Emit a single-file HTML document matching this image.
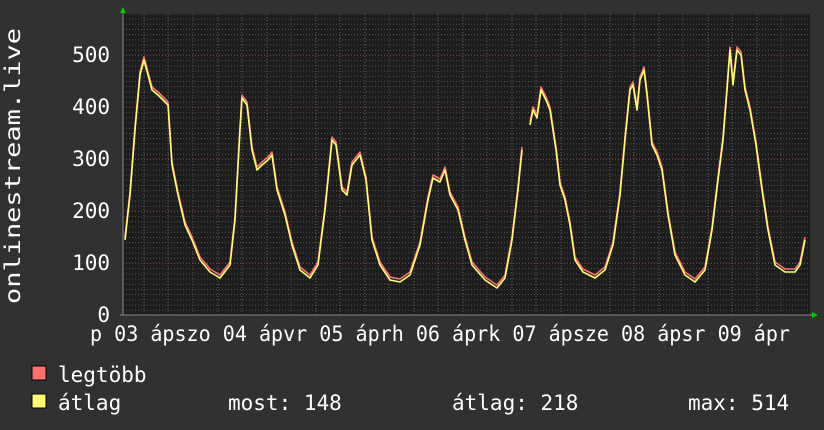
<!DOCTYPE html>
<html><head><meta charset="utf-8"><style>
body{margin:0;background:#313131;width:824px;height:430px;overflow:hidden}
svg{display:block}
text{font-family:"DejaVu Sans Mono","Liberation Mono",monospace;fill:#fff;font-size:21px}
</style></head><body>
<svg width="824" height="430" xmlns="http://www.w3.org/2000/svg">
<defs>
<pattern id="hg" width="824" height="5.2" patternUnits="userSpaceOnUse" y="315">
<line x1="0" y1="0.5" x2="824" y2="0.5" stroke="#555" stroke-dasharray="1,2"/>
</pattern>
</defs>
<rect x="123" y="14" width="687" height="301" fill="#1d1d1d"/>
<rect x="123" y="14" width="687" height="301" fill="url(#hg)"/>
<g stroke="#666" stroke-dasharray="1,2">
<line x1="144" y1="14" x2="144" y2="315"/><line x1="168" y1="14" x2="168" y2="315"/>
<line x1="218" y1="14" x2="218" y2="315"/><line x1="242" y1="14" x2="242" y2="315"/><line x1="267" y1="14" x2="267" y2="315"/>
<line x1="316" y1="14" x2="316" y2="315"/><line x1="340" y1="14" x2="340" y2="315"/><line x1="365" y1="14" x2="365" y2="315"/>
<line x1="414" y1="14" x2="414" y2="315"/><line x1="438" y1="14" x2="438" y2="315"/><line x1="463" y1="14" x2="463" y2="315"/>
<line x1="512" y1="14" x2="512" y2="315"/><line x1="536" y1="14" x2="536" y2="315"/><line x1="561" y1="14" x2="561" y2="315"/>
<line x1="610" y1="14" x2="610" y2="315"/><line x1="634" y1="14" x2="634" y2="315"/><line x1="659" y1="14" x2="659" y2="315"/>
<line x1="708" y1="14" x2="708" y2="315"/><line x1="732" y1="14" x2="732" y2="315"/><line x1="757" y1="14" x2="757" y2="315"/>
</g>
<g stroke="#7a4040" stroke-dasharray="1,2">
<line x1="193" y1="14" x2="193" y2="315"/><line x1="291" y1="14" x2="291" y2="315"/><line x1="389" y1="14" x2="389" y2="315"/>
<line x1="487" y1="14" x2="487" y2="315"/><line x1="585" y1="14" x2="585" y2="315"/><line x1="683" y1="14" x2="683" y2="315"/><line x1="781" y1="14" x2="781" y2="315"/>
<line x1="123" y1="263" x2="810" y2="263"/><line x1="123" y1="211" x2="810" y2="211"/><line x1="123" y1="159" x2="810" y2="159"/>
<line x1="123" y1="107" x2="810" y2="107"/><line x1="123" y1="55" x2="810" y2="55"/>
</g>
<line x1="123" y1="10" x2="123" y2="315" stroke="#888"/>
<line x1="120" y1="315" x2="814" y2="315" stroke="#888"/>
<polygon points="120,13 126,13 123,7" fill="#0c0"/>
<polygon points="812,312 812,318 818,315" fill="#0c0"/>
<g fill="none" stroke-width="1.6" stroke-linejoin="round">
<polyline stroke="#ff7070" transform="translate(0,-3)" points="125,240 130,195 135,130 140,75 144,60 148,75 152,90 158,95 163,100 168,105 172,165 178,195 185,225 192,240 200,260 210,272 220,278 230,265 235,220 240,130 242,98 247,105 252,150 257,170 262,165 268,160 272,155 277,190 285,215 292,245 300,270 310,278 318,265 325,210 332,140 336,145 342,190 347,195 352,165 360,155 366,180 372,240 380,265 390,280 400,282 410,275 420,245 428,200 433,178 440,182 445,170 450,195 458,210 465,240 472,265 485,280 497,288 505,278 512,240 518,190 522,150"/>
<polyline stroke="#ff7070" transform="translate(0,-3)" points="530,125 533,110 537,118 541,90 546,100 550,110 556,150 560,185 565,200 570,225 575,260 583,272 595,278 605,270 613,245 620,195 625,140 630,90 633,85 637,110 640,80 644,70 647,95 652,145 657,155 662,170 668,215 675,255 685,275 695,282 705,270 712,230 718,180 723,140 727,90 730,50 733,85 737,50 741,55 745,90 750,110 756,145 762,190 768,230 775,265 785,272 795,272 800,265 805,240"/>
<polyline stroke="#ffff70" points="125,240 130,195 135,130 140,75 144,60 148,75 152,90 158,95 163,100 168,105 172,165 178,195 185,225 192,240 200,260 210,272 220,278 230,265 235,220 240,130 242,98 247,105 252,150 257,170 262,165 268,160 272,155 277,190 285,215 292,245 300,270 310,278 318,265 325,210 332,140 336,145 342,190 347,195 352,165 360,155 366,180 372,240 380,265 390,280 400,282 410,275 420,245 428,200 433,178 440,182 445,170 450,195 458,210 465,240 472,265 485,280 497,288 505,278 512,240 518,190 522,150"/>
<polyline stroke="#ffff70" points="530,125 533,110 537,118 541,90 546,100 550,110 556,150 560,185 565,200 570,225 575,260 583,272 595,278 605,270 613,245 620,195 625,140 630,90 633,85 637,110 640,80 644,70 647,95 652,145 657,155 662,170 668,215 675,255 685,275 695,282 705,270 712,230 718,180 723,140 727,90 730,50 733,85 737,50 741,55 745,90 750,110 756,145 762,190 768,230 775,265 785,272 795,272 800,265 805,240"/>
</g>
<g text-anchor="end">
<text x="110" y="322">0</text><text x="110" y="270">100</text><text x="110" y="218">200</text>
<text x="110" y="166">300</text><text x="110" y="114">400</text><text x="110" y="62">500</text>
</g>
<text transform="translate(20,166) rotate(-90)" text-anchor="middle" textLength="276" lengthAdjust="spacingAndGlyphs">onlinestream.live</text>
<text x="90" y="341" textLength="700" lengthAdjust="spacingAndGlyphs">p 03 ápszo 04 ápvr 05 áprh 06 áprk 07 ápsze 08 ápsr 09 ápr</text>
<rect x="32" y="366" width="14" height="14" fill="#ff7070" stroke="#000"/>
<rect x="32" y="394" width="14" height="14" fill="#ffff70" stroke="#000"/>
<text x="58" y="382">legtöbb</text>
<text x="58" y="410">átlag</text>
<text x="228" y="410">most: 148</text>
<text x="452" y="410">átlag: 218</text>
<text x="688" y="410">max: 514</text>
</svg>
</body></html>
